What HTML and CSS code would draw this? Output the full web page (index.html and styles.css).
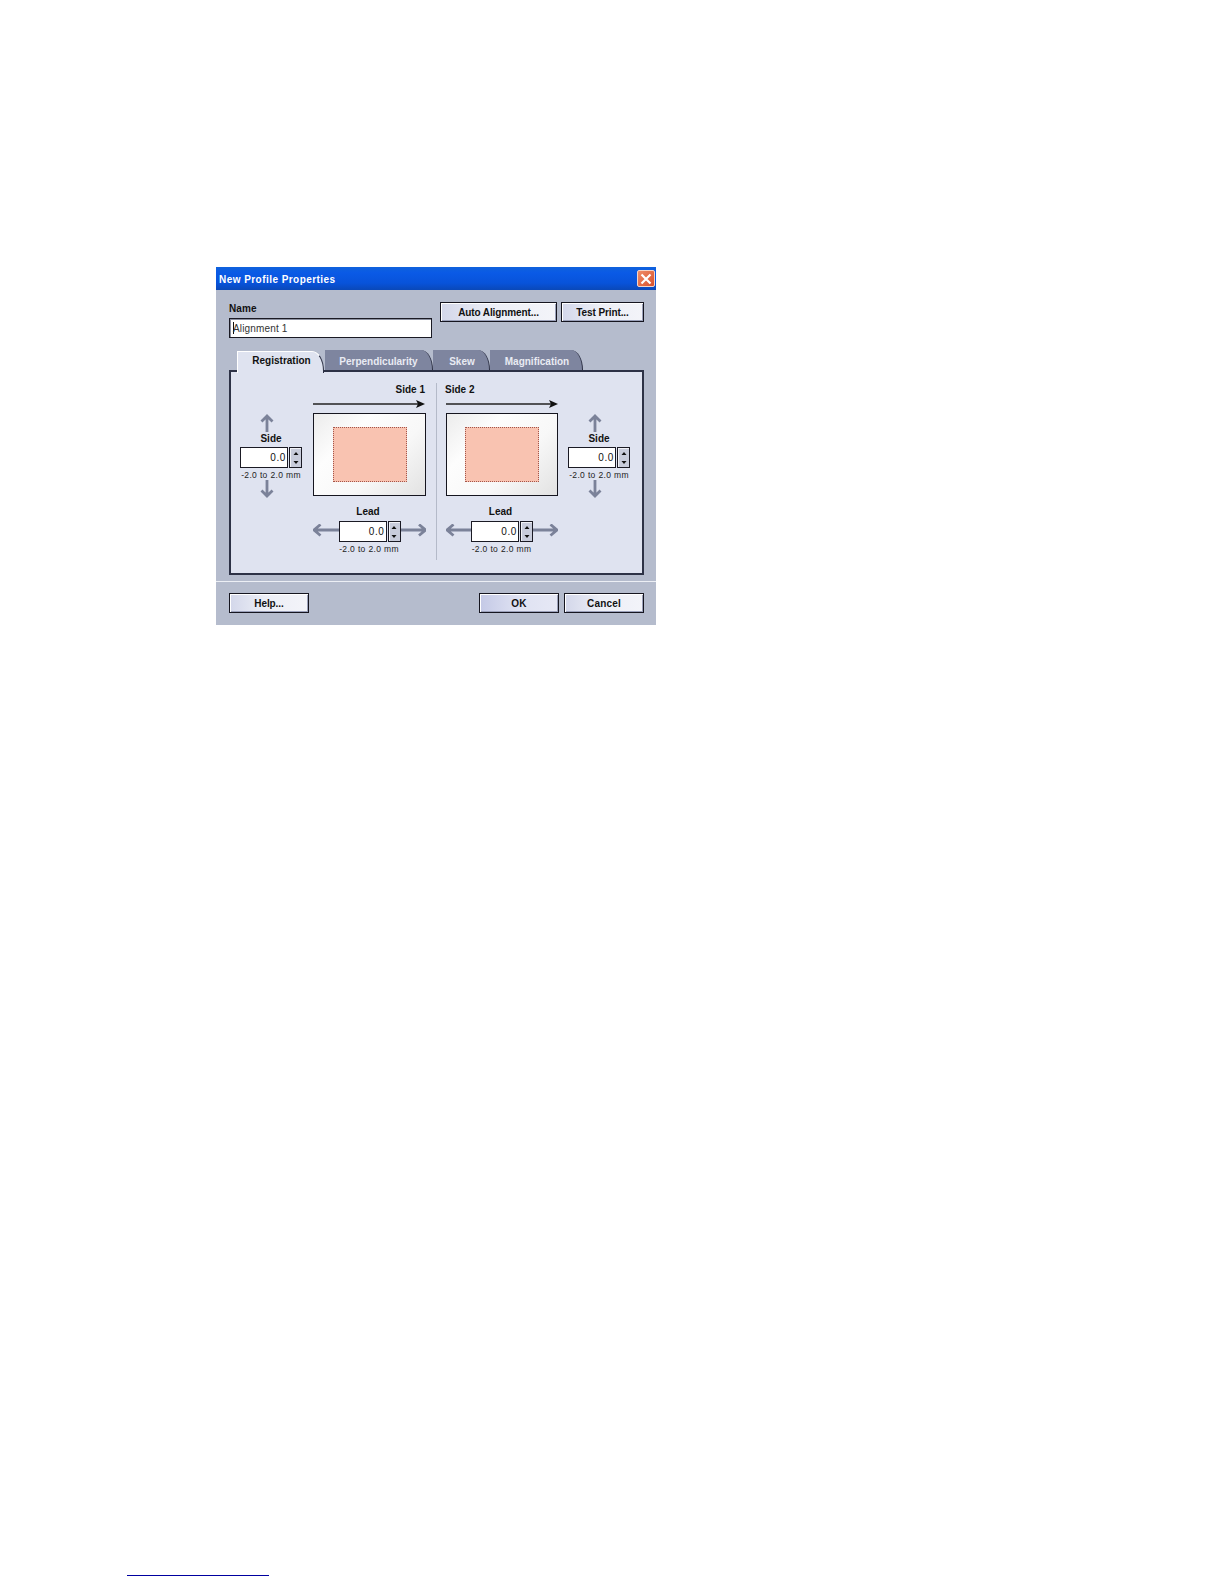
FILE: index.html
```html
<!DOCTYPE html>
<html>
<head>
    <meta charset="UTF-8">
    <link rel="stylesheet" href="styles.css">
</head>
<body>
    <div class="dialog">
        <div class="title-bar">
            <span class="title">New Profile Properties</span>
            <span class="close-btn">
                <svg width="12" height="12" viewBox="0 0 12 12"><path d="M1.5 1.5 L10.5 10.5 M10.5 1.5 L1.5 10.5" stroke="#fff" stroke-width="2.2" fill="none"/></svg>
            </span>
        </div>

        <div class="dialog-body">
            <div class="top-row">
                <div class="name-group">
                    <div class="name-label">Name</div>
                    <div class="name-input"><span class="caret"></span>Alignment 1</div>
                </div>
                <button class="btn btn-auto">Auto Alignment...</button>
                <button class="btn btn-test">Test Print...</button>
            </div>

            <div class="tabs">
                <div class="tab tab-active tab-registration">Registration</div>
                <div class="tab tab-perpendicularity">Perpendicularity</div>
                <div class="tab tab-skew">Skew</div>
                <div class="tab tab-magnification">Magnification</div>
            </div>

            <div class="panel">
                <div class="side side-1">
                    <div class="side-stepper">
                        <svg class="arrow-v" width="14" height="18" viewBox="0 0 14 18"><path d="M7 18 V2 M1.5 7.5 L7 2 L12.5 7.5" stroke="#7b8299" stroke-width="2.8" fill="none"/></svg>
                        <div class="field-label">Side</div>
                        <div class="spin">
                            <div class="spin-value">0.0</div>
                            <div class="spin-buttons">
                                <svg width="6" height="14" viewBox="0 0 6 14"><path d="M3 1 L5.5 4 H0.5 Z M0.5 10 H5.5 L3 13 Z" fill="#111"/></svg>
                            </div>
                        </div>
                        <div class="range">-2.0 to 2.0 mm</div>
                        <svg class="arrow-v arrow-down" width="14" height="18" viewBox="0 0 14 18"><path d="M7 0 V16 M1.5 10.5 L7 16 L12.5 10.5" stroke="#7b8299" stroke-width="2.8" fill="none"/></svg>
                    </div>
                    <div class="diagram">
                        <div class="diagram-label label-right">Side 1</div>
                        <svg class="feed-arrow" width="113" height="10" viewBox="0 0 113 10"><path d="M0 5 H107" stroke="#222" stroke-width="1.6"/><path d="M103 1 L112 5 L103 9 L105 5 Z" fill="#111"/></svg>
                        <div class="sheet"><div class="image-area"></div></div>
                        <div class="field-label lead-label">Lead</div>
                        <div class="lead-row">
                            <svg class="arrow-h" height="16" viewBox="0 0 26 16" preserveAspectRatio="xMinYMid slice"><path d="M26 6 H1 M7.5 0.5 L1 6 L7.5 11.5" stroke="#7b8299" stroke-width="2.8" fill="none"/></svg>
                            <div class="spin">
                                <div class="spin-value">0.0</div>
                                <div class="spin-buttons">
                                    <svg width="6" height="14" viewBox="0 0 6 14"><path d="M3 1 L5.5 4 H0.5 Z M0.5 10 H5.5 L3 13 Z" fill="#111"/></svg>
                                </div>
                            </div>
                            <svg class="arrow-h" height="16" viewBox="0 0 26 16" preserveAspectRatio="xMaxYMid slice"><path d="M0 6 H25 M18.5 0.5 L25 6 L18.5 11.5" stroke="#7b8299" stroke-width="2.8" fill="none"/></svg>
                        </div>
                        <div class="range">-2.0 to 2.0 mm</div>
                    </div>
                </div>

                <div class="divider"></div>

                <div class="side side-2">
                    <div class="diagram">
                        <div class="diagram-label">Side 2</div>
                        <svg class="feed-arrow" width="112" height="10" viewBox="0 0 112 10"><path d="M0 5 H107" stroke="#222" stroke-width="1.6"/><path d="M103 1 L112 5 L103 9 L105 5 Z" fill="#111"/></svg>
                        <div class="sheet"><div class="image-area"></div></div>
                        <div class="field-label lead-label">Lead</div>
                        <div class="lead-row">
                            <svg class="arrow-h" height="16" viewBox="0 0 26 16" preserveAspectRatio="xMinYMid slice"><path d="M26 6 H1 M7.5 0.5 L1 6 L7.5 11.5" stroke="#7b8299" stroke-width="2.8" fill="none"/></svg>
                            <div class="spin">
                                <div class="spin-value">0.0</div>
                                <div class="spin-buttons">
                                    <svg width="6" height="14" viewBox="0 0 6 14"><path d="M3 1 L5.5 4 H0.5 Z M0.5 10 H5.5 L3 13 Z" fill="#111"/></svg>
                                </div>
                            </div>
                            <svg class="arrow-h" height="16" viewBox="0 0 26 16" preserveAspectRatio="xMaxYMid slice"><path d="M0 6 H25 M18.5 0.5 L25 6 L18.5 11.5" stroke="#7b8299" stroke-width="2.8" fill="none"/></svg>
                        </div>
                        <div class="range">-2.0 to 2.0 mm</div>
                    </div>
                    <div class="side-stepper">
                        <svg class="arrow-v" width="14" height="18" viewBox="0 0 14 18"><path d="M7 18 V2 M1.5 7.5 L7 2 L12.5 7.5" stroke="#7b8299" stroke-width="2.8" fill="none"/></svg>
                        <div class="field-label">Side</div>
                        <div class="spin">
                            <div class="spin-value">0.0</div>
                            <div class="spin-buttons">
                                <svg width="6" height="14" viewBox="0 0 6 14"><path d="M3 1 L5.5 4 H0.5 Z M0.5 10 H5.5 L3 13 Z" fill="#111"/></svg>
                            </div>
                        </div>
                        <div class="range">-2.0 to 2.0 mm</div>
                        <svg class="arrow-v arrow-down" width="14" height="18" viewBox="0 0 14 18"><path d="M7 0 V16 M1.5 10.5 L7 16 L12.5 10.5" stroke="#7b8299" stroke-width="2.8" fill="none"/></svg>
                    </div>
                </div>
            </div>
        </div>

        <div class="footer">
            <button class="btn btn-help">Help...</button>
            <button class="btn btn-ok">OK</button>
            <button class="btn btn-cancel">Cancel</button>
        </div>
    </div>

    <div class="footnote-rule"></div>
</body>
</html>
```

FILE: styles.css
```css
body {
    margin: 0;
    height: 1584px;
    padding: 267px 0 0 127px;
    box-sizing: border-box;
    background: #fff;
    font-family: "Liberation Sans", Arial, sans-serif;
    font-size: 10px;
    color: #111;
    overflow: hidden;
}

.dialog {
    width: 440px;
    height: 358px;
    margin-left: 89px;
    background: #b5bccd;
}

.title-bar {
    height: 23px;
    box-sizing: border-box;
    display: flex;
    justify-content: space-between;
    align-items: center;
    padding: 0 1px 0 3px;
    background: linear-gradient(180deg, #0f62dc 0%, #0a5ae6 25%, #0853da 70%, #0a48b8 100%);
}

.title {
    padding-top: 1px;
    color: #fff;
    font-weight: bold;
    font-size: 10px;
    letter-spacing: 0.45px;
}

.close-btn {
    width: 18px;
    height: 17px;
    box-sizing: border-box;
    display: flex;
    align-items: center;
    justify-content: center;
    background: linear-gradient(135deg, #ef8d68, #d9512c);
    border: 1px solid #f3d5c8;
    border-radius: 2px;
}

.dialog-body {
    padding: 12px 12px 0 13px;
}

.top-row {
    display: flex;
    align-items: flex-start;
}

.name-group {
    width: 203px;
    margin-right: 8px;
}

.name-label {
    line-height: 14px;
    font-weight: bold;
    letter-spacing: 0.1px;
}

.name-input {
    height: 20px;
    margin-top: 2px;
    box-sizing: border-box;
    display: flex;
    align-items: center;
    padding-left: 3px;
    border: 1px solid #1a1a24;
    background: #fff;
    color: #333;
    letter-spacing: 0.15px;
    box-shadow: inset 1px 1px 0 #8b90a0;
}

.caret {
    width: 1px;
    height: 12px;
    margin-right: -1px;
    background: #111;
}

.btn {
    height: 20px;
    padding: 0;
    box-sizing: border-box;
    border: 1px solid #15151f;
    background: linear-gradient(90deg, #d3d7ea 0%, #eceef6 45%, #f3f4f9 100%);
    box-shadow: inset 1px 1px 0 #fff, inset -1px -1px 0 #9ba1ba;
    font-family: "Liberation Sans", Arial, sans-serif;
    font-size: 10px;
    font-weight: bold;
    letter-spacing: 0.2px;
    color: #111;
}

.btn-auto {
    width: 117px;
    margin-right: 4px;
    letter-spacing: -0.1px;
}

.btn-test {
    width: 83px;
    letter-spacing: -0.1px;
}

.tabs {
    display: flex;
    height: 20px;
    margin-top: 12px;
    padding-left: 8px;
}

.tab {
    height: 20px;
    box-sizing: border-box;
    display: flex;
    align-items: center;
    justify-content: center;
    padding-top: 3px;
    background: #7e859f;
    border-right: 1px solid #2c3044;
    border-radius: 0 12px 0 0 / 0 20px 0 0;
    color: #e9ebf3;
    font-weight: bold;
}

.tab-active {
    position: relative;
    z-index: 1;
    margin-top: 1px;
    margin-right: 1px;
    padding-top: 0;
    padding-bottom: 5px;
    padding-left: 2px;
    background: #dfe3f0;
    border-top: 1px solid #fff;
    border-left: 1px solid #fff;
    color: #111;
}

.tab-registration { width: 87px; height: 22px; }
.tab-perpendicularity { width: 108px; }
.tab-skew { width: 57px; padding-left: 2px; }
.tab-magnification { width: 93px; padding-left: 2px; }

.panel {
    height: 205px;
    box-sizing: border-box;
    display: flex;
    padding-top: 11px;
    background: #dfe3f0;
    border: 2px solid #2d3246;
}

.side {
    display: flex;
    padding-left: 9px;
}

.side-1 {
    width: 205px;
    box-sizing: border-box;
    gap: 11px;
}

.side-2 {
    gap: 10px;
}

.divider {
    width: 1px;
    height: 177px;
    background: #b4bac9;
}

.side-stepper {
    width: 62px;
    display: flex;
    flex-direction: column;
    align-items: center;
    padding-top: 31px;
}

.arrow-v {
    align-self: flex-start;
    margin-left: 20px;
}

.field-label {
    line-height: 14px;
    font-weight: bold;
    text-align: center;
}

.spin {
    width: 62px;
    height: 21px;
    flex: none;
    display: flex;
    gap: 1px;
    margin-top: 1px;
}

.lead-row .spin {
    margin-top: 0;
}

.spin-value {
    flex: 1;
    box-sizing: border-box;
    padding-right: 1px;
    border: 1px solid #1a1a24;
    background: #fff;
    font-size: 10px;
    line-height: 19px;
    text-align: right;
    color: #111;
    letter-spacing: 0.6px;
}

.spin-buttons {
    width: 13px;
    box-sizing: border-box;
    display: flex;
    align-items: center;
    justify-content: center;
    border: 1px solid #1a1a24;
    background: #c8ccdb;
    box-shadow: inset 1px 1px 0 #f1f2f7;
}

.range {
    margin-top: 2px;
    line-height: 10px;
    font-size: 8.5px;
    letter-spacing: 0.35px;
    text-align: center;
    white-space: nowrap;
    color: #222;
}

.diagram {
    display: flex;
    flex-direction: column;
}

.side-1 .diagram { width: 113px; }
.side-2 .diagram { width: 112px; }

.diagram-label {
    line-height: 14px;
    font-weight: bold;
}

.side-2 .diagram-label {
    margin-left: -1px;
}

.label-right {
    text-align: right;
    padding-right: 1px;
}

.feed-arrow {
    display: block;
    margin-top: 2px;
}

.sheet {
    height: 83px;
    margin-top: 4px;
    box-sizing: border-box;
    padding: 13px 18px 13px 19px;
    border: 1px solid #15151f;
    background: linear-gradient(135deg, #ececec 0%, #fdfdfd 30%, #f8f8f8 62%, #e2e2e2 100%);
}

.side-2 .sheet {
    padding-left: 18px;
}

.image-area {
    height: 100%;
    box-sizing: border-box;
    background: #f9c3b1;
    border: 1px dotted #a3554a;
}

.lead-label {
    margin-top: 9px;
    padding-right: 3px;
}

.lead-row {
    display: flex;
    align-items: center;
    height: 21px;
    margin-top: 2px;
}

.arrow-h {
    flex: 1;
    min-width: 0;
}

.lead-row + .range {
    margin-top: 2px;
    padding-right: 1px;
}

.footer {
    display: flex;
    margin-top: 6px;
    padding: 11px 12px 12px 13px;
    border-top: 1px solid #eceff5;
}

.btn-help {
    width: 80px;
    letter-spacing: -0.1px;
}

.btn-ok {
    width: 80px;
    margin-left: auto;
    margin-right: 5px;
    background: linear-gradient(90deg, #c4c9e6 0%, #dfe2f2 50%, #e6e8f5 100%);
}

.btn-cancel { width: 80px; }

.footnote-rule {
    width: 142px;
    height: 1px;
    margin-top: 950px;
    background: #0000a0;
}
```
